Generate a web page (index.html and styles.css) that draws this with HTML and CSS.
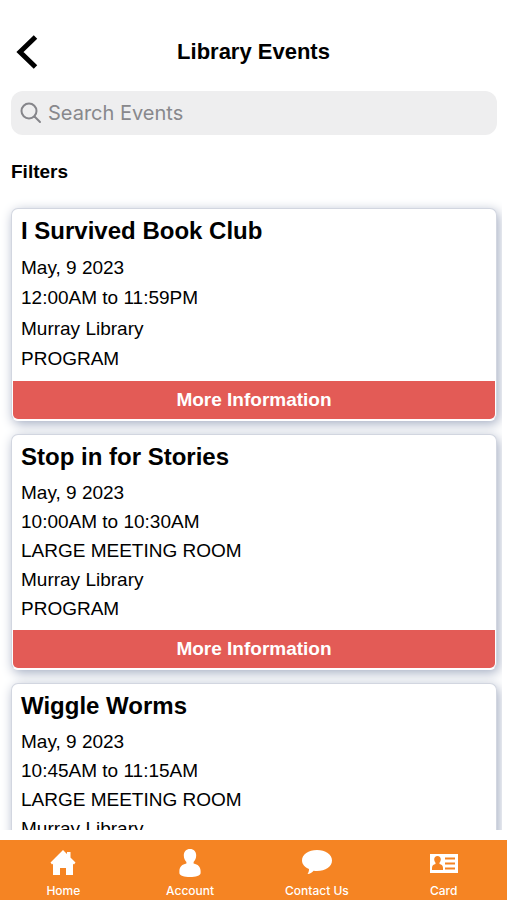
FILE: index.html
```html
<!DOCTYPE html>
<html lang="en">
<head>
<meta charset="utf-8">
<meta name="viewport" content="width=device-width, initial-scale=1">
<title>Library Events</title>
<link rel="stylesheet" href="styles.css">
</head>
<body>
<div class="app">
  <header class="topbar">
    <button class="back" type="button" aria-label="Back">
      <svg width="22" height="36" viewBox="0 0 22 36" fill="none" stroke="#000" stroke-width="5"><path d="M19.500 3 4 18l15.500 15"/></svg>
    </button>
    <h1 class="page-title">Library Events</h1>
  </header>
  <label class="search">
    <svg width="22" height="22" viewBox="0 0 22 22" fill="none" stroke="#85858a" stroke-width="2" stroke-linecap="round"><circle cx="9" cy="9" r="7.500"/><path d="m14.500 14.500 5.500 5.500"/></svg>
    <input class="search-input" type="search" placeholder="Search Events" aria-label="Search Events">
  </label>
  <h2 class="filters"><button class="filters-button" type="button">Filters</button></h2>
  <main class="events">
    <article class="card">
      <h3 class="card-title">I Survived Book Club</h3>
      <ul class="details">
        <li>May, 9 2023</li>
        <li>12:00AM to 11:59PM</li>
        <li>Murray Library</li>
        <li>PROGRAM</li>
      </ul>
      <button class="more" type="button">More Information</button>
    </article>
    <article class="card">
      <h3 class="card-title">Stop in for Stories</h3>
      <ul class="details">
        <li>May, 9 2023</li>
        <li>10:00AM to 10:30AM</li>
        <li>LARGE MEETING ROOM</li>
        <li>Murray Library</li>
        <li>PROGRAM</li>
      </ul>
      <button class="more" type="button">More Information</button>
    </article>
    <article class="card">
      <h3 class="card-title">Wiggle Worms</h3>
      <ul class="details">
        <li>May, 9 2023</li>
        <li>10:45AM to 11:15AM</li>
        <li>LARGE MEETING ROOM</li>
        <li>Murray Library</li>
        <li>PROGRAM</li>
      </ul>
      <button class="more" type="button">More Information</button>
    </article>
  </main>
  <nav class="tabs">
    <a class="tab" href="#home">
      <svg width="32" height="32" viewBox="0 0 32 32" fill="#fff"><path d="M16 3 28.500 15.500 27 17.500 26 16.800V28H19V21H13V28H6V16.800L5 17.500 3.500 15.500ZM20 5H23.500V12L20 9Z"/></svg>
      <span>Home</span>
    </a>
    <a class="tab" href="#account">
      <svg width="32" height="32" viewBox="0 0 32 32" fill="#fff"><path d="M16 2c3.800 0 6.200 2.600 6.200 6.200 0 3.200-1.200 5.300-2.600 6.800v1.500c4.200.8 7 3.300 7 7.500v2c0 2.600-5 4-10.600 4s-10.600-1.400-10.600-4v-2c0-4.200 2.800-6.700 7-7.500V15c-1.400-1.500-2.600-3.600-2.600-6.800C9.800 4.600 12.200 2 16 2Z"/></svg>
      <span>Account</span>
    </a>
    <a class="tab" href="#contact">
      <svg width="32" height="32" viewBox="0 0 32 32" fill="#fff"><path d="M16 3c8.500 0 15 4.500 15 10.500S24.500 24 16 24c-1.200 0-2.300-.1-3.400-.3C11 25.500 9 26.700 6.500 27c1-1.300 1.500-2.700 1.500-4.900C3.800 20.300 1 17.200 1 13.500 1 7.500 7.500 3 16 3Z"/></svg>
      <span>Contact Us</span>
    </a>
    <a class="tab" href="#card">
      <svg width="32" height="32" viewBox="0 0 32 32"><path fill="#fff" d="M2 7h28v19H2z"/><path fill="#f58423" d="M9.500 9c2 0 3.300 1.400 3.300 3.300 0 1.500-.6 2.600-1.300 3.400v1.300c2.200.4 3.500 1.800 3.500 4V23H4v-2c0-2.200 1.300-3.600 3.500-4v-1.300c-.7-.8-1.300-1.900-1.300-3.400C6.200 10.400 7.500 9 9.500 9ZM17 10.500h10v2H17zM17 15.500h10v2H17zM17 20.500h10v2H17z"/></svg>
      <span>Card</span>
    </a>
  </nav>
</div>
</body>
</html>
```
FILE: styles.css
```css
* {
  box-sizing: border-box;
}

body {
  margin: 0;
  background: #fff;
  color: #000;
  font-family: "Liberation Sans", Arial, sans-serif;
}

button {
  border: 0;
  padding: 0;
  background: none;
  color: inherit;
  font: inherit;
  cursor: pointer;
}

.app {
  display: flex;
  flex-direction: column;
  height: 100vh;
}

.topbar {
  display: grid;
  grid-template-columns: 44px 1fr 44px;
  align-items: center;
  padding: 32px 8px 19px;
}

.back {
  display: flex;
  padding: 2px 8px;
}

.page-title {
  margin: 0;
  font-size: 22px;
  line-height: 26px;
  text-align: center;
}

.search {
  display: flex;
  align-items: center;
  gap: 6px;
  height: 44px;
  margin: 0 10px 0 11px;
  padding: 0 9px;
  border-radius: 12px;
  background: #eeeeef;
}

.search-input {
  flex: 1;
  min-width: 0;
  padding: 0;
  border: 0;
  outline: 0;
  background: none;
  font-family: Inter, sans-serif;
  font-size: 20px;
}

.search-input::placeholder {
  color: #88888c;
  opacity: 1;
}

.filters {
  margin: 25px 11px 0;
  font-size: 19px;
  line-height: 24px;
}

.events {
  flex: 1;
  min-height: 0;
  display: flex;
  flex-direction: column;
  gap: 13px;
  margin: 12px 5px 10px 0;
  padding: 12px 5px 12px 11px;
  overflow: hidden;
}

.card {
  flex: none;
  display: flex;
  flex-direction: column;
  min-height: 213px;
  padding: 1px;
  border: 1px solid #d2d6e0;
  border-bottom-color: #fff;
  border-radius: 7px;
  background: #fff;
  box-shadow: 2px 3px 12px #a4adc2;
}

.card-title {
  margin: 5px 8px;
  font-size: 24px;
  line-height: 32px;
}

.details {
  flex: 1;
  display: flex;
  flex-direction: column;
  margin: 0 8px 7px;
  padding: 0;
  list-style: none;
  font-size: 19px;
  line-height: 29px;
}

.details li {
  flex: 1 0 auto;
  display: flex;
  align-items: center;
}

.more {
  height: 38px;
  border-radius: 0 0 5px 5px;
  background: #e35b56;
  color: #fff;
  font-size: 19px;
  font-weight: bold;
}

.tabs {
  display: grid;
  grid-template-columns: repeat(4, 1fr);
  height: 60px;
  background: #f58423;
}

.tab {
  display: flex;
  flex-direction: column;
  align-items: center;
  gap: 5px;
  padding-top: 7px;
  color: #fff;
  font-family: Inter, sans-serif;
  font-size: 12px;
  font-weight: 500;
  line-height: 14px;
  text-decoration: none;
}
```
